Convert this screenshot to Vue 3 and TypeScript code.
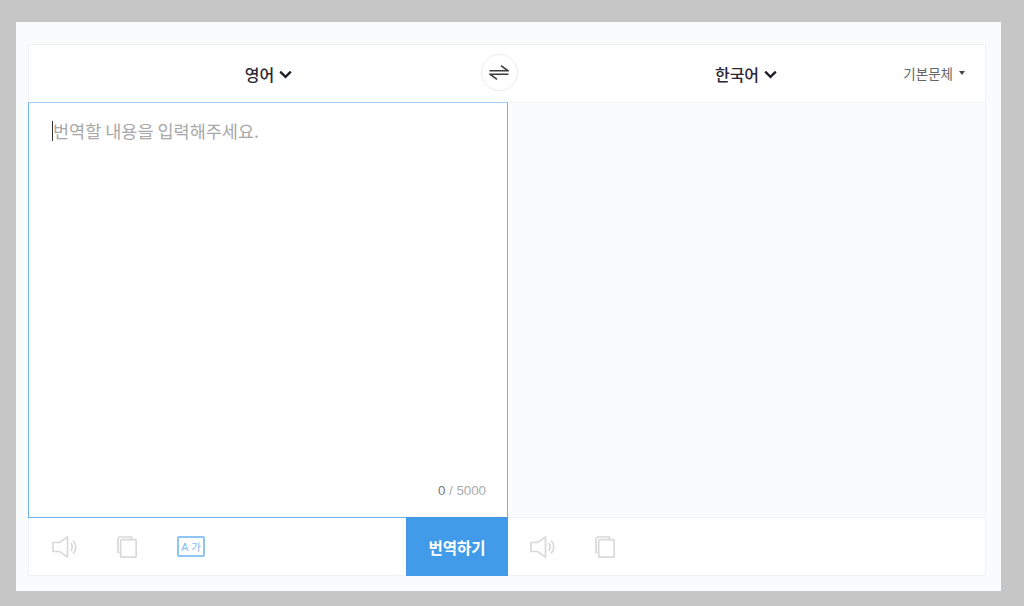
<script setup lang="ts">
const placeholder: string = '번역할 내용을 입력해주세요.'
</script>

<template>
  <div class="page">
    <div class="panel">
      <div class="card">
        <header class="head">
          <div class="lang-cell">
            <span class="lang">영어</span>
            <svg class="chev" width="13" height="9" viewBox="0 0 13 9"><path d="M1.2 1.6 6.5 6.9 11.8 1.6" fill="none" stroke="#1c1c24" stroke-width="2.2"/></svg>
          </div>
          <div class="lang-cell right">
            <span class="lang">한국어</span>
            <svg class="chev" width="13" height="9" viewBox="0 0 13 9"><path d="M1.2 1.6 6.5 6.9 11.8 1.6" fill="none" stroke="#1c1c24" stroke-width="2.2"/></svg>
            <div class="font-select">
              <span>기본문체</span>
              <i class="caret"></i>
            </div>
          </div>
          <button class="swap" type="button" aria-label="swap">
            <svg width="20" height="17" viewBox="0 0 20 17">
              <path d="M0.5 6.8H19L12 1.6" fill="none" stroke="#3c3c3c" stroke-width="1.5"/>
              <path d="M19.5 10.2H1L8 15.4" fill="none" stroke="#3c3c3c" stroke-width="1.5"/>
            </svg>
          </button>
        </header>
        <div class="body">
          <section class="input">
            <div class="placeholder"><i class="cursor"></i>{{ placeholder }}</div>
            <div class="count"><b>0</b> / 5000</div>
          </section>
          <section class="output"></section>
        </div>
        <footer class="foot">
          <div class="foot-left">
            <div class="tools">
              <svg class="speaker" width="26" height="22" viewBox="0 0 26 22" fill="none" stroke="#d9d9d9" stroke-width="1.7">
                <path d="M1 6.5H7.5L15.5 1V21L7.5 15.5H1Z"/>
                <path d="M18.5 7a5.5 5.5 0 0 1 0 8"/>
                <path d="M21 4.5a9 9 0 0 1 0 13"/>
              </svg>
              <svg class="copy" width="20" height="22" viewBox="0 0 20 22" fill="none" stroke="#d9d9d9" stroke-width="1.7">
                <path d="M2.6 16.5H1V2.5L2.5 1H14.5V3"/>
                <rect x="3.7" y="3.7" width="15.5" height="17.5" rx="1"/>
              </svg>
              <div class="ag">
                <span>A</span><span class="ga">가</span>
              </div>
            </div>
            <button class="translate" type="button">번역하기</button>
          </div>
          <div class="foot-right">
            <svg class="speaker" width="26" height="22" viewBox="0 0 26 22" fill="none" stroke="#d9d9d9" stroke-width="1.7">
              <path d="M1 6.5H7.5L15.5 1V21L7.5 15.5H1Z"/>
              <path d="M18.5 7a5.5 5.5 0 0 1 0 8"/>
              <path d="M21 4.5a9 9 0 0 1 0 13"/>
            </svg>
            <svg class="copy" width="20" height="22" viewBox="0 0 20 22" fill="none" stroke="#d9d9d9" stroke-width="1.7">
              <path d="M2.6 16.5H1V2.5L2.5 1H14.5V3"/>
              <rect x="3.7" y="3.7" width="15.5" height="17.5" rx="1"/>
            </svg>
          </div>
        </footer>
      </div>
    </div>
  </div>
</template>

<style>
html, body { margin: 0; background: #c6c6c6; }
</style>

<style scoped>
.page {
  width: 1024px;
  height: 606px;
  box-sizing: border-box;
  padding: 22px 23px 15px 16px;
  background: #c6c6c6;
  font-family: "Liberation Sans", "Noto Sans CJK KR", sans-serif;
}
.panel {
  height: 100%;
  box-sizing: border-box;
  padding: 22px 15px 15px 12px;
  background: #fafbfd;
}
.card {
  height: 100%;
  box-sizing: border-box;
  display: flex;
  flex-direction: column;
  border: 1px solid #eff1f6;
  background: #fff;
}
.head {
  position: relative;
  flex: 0 0 57px;
  display: flex;
}
.lang-cell {
  position: relative;
  width: 479px;
  display: flex;
  align-items: center;
  justify-content: center;
  gap: 5px;
  padding-top: 1px;
  box-sizing: border-box;
}
.lang-cell.right { width: 476px; }
.lang {
  font-size: 16px;
  font-weight: 500;
  color: #2b2632;
  font-family: "Noto Sans CJK KR", sans-serif;
}
.chev { margin-top: 1px; }
.font-select {
  position: absolute;
  right: 19px;
  top: 19px;
  display: flex;
  align-items: center;
  gap: 6px;
  font-size: 13.5px;
  line-height: 18px;
  color: #666;
  font-family: "Noto Sans CJK KR", sans-serif;
}
.caret {
  width: 0;
  height: 0;
  border-left: 3.5px solid transparent;
  border-right: 3.5px solid transparent;
  border-top: 4px solid #444;
}
.swap {
  position: absolute;
  left: 452px;
  top: 9px;
  width: 37px;
  height: 37px;
  box-sizing: border-box;
  padding: 0 2px 0 0;
  border: 1px solid #ececec;
  border-radius: 50%;
  background: #fff;
  display: flex;
  align-items: center;
  justify-content: center;
}
.body {
  flex: 1;
  display: flex;
  min-height: 0;
}
.input {
  width: 480px;
  margin-left: -1px;
  box-sizing: border-box;
  border: 1px solid #6cb2ee;
  border-top-color: #9fd0f7;
  background: #fff;
  display: flex;
  flex-direction: column;
  justify-content: space-between;
  padding: 16px 21px 17px 23px;
}
.placeholder {
  display: flex;
  align-items: center;
  font-size: 17.5px;
  line-height: 24px;
  color: #a8a8a8;
  font-family: "Noto Sans CJK KR", sans-serif;
}
.cursor {
  width: 1px;
  height: 20px;
  background: #333;
}
.count {
  text-align: right;
  font-size: 13.3px;
  line-height: 18px;
  color: #aaa;
}
.count b { font-weight: 400; color: #777; }
.output {
  flex: 1;
  background: #fafbfd;
  border-top: 1px solid #f4f5f8;
  border-bottom: 1px solid #f2f3f6;
}
.foot {
  flex: 0 0 57px;
  min-height: 0;
  height: 57px;
  display: flex;
}
.foot-left {
  width: 479px;
  height: 57px;
  display: flex;
  justify-content: space-between;
}
.tools {
  display: flex;
  align-items: center;
  gap: 39px;
  padding-left: 23px;
}
.ag {
  width: 28px;
  height: 21px;
  box-sizing: border-box;
  border: 2px solid #8fc5f4;
  border-radius: 2px;
  display: flex;
  align-items: center;
  justify-content: center;
  gap: 3px;
  margin-left: 1px;
  font-size: 10.5px;
  color: #7fbcf1;
}
.ga { font-family: "Noto Sans CJK KR", sans-serif; }
.translate {
  width: 102px;
  height: 59px;
  margin-top: -1px;
  border: 0;
  padding: 0;
  background: #429be8;
  color: #fff;
  font-size: 15.5px;
  font-weight: 700;
  font-family: "Noto Sans CJK KR", sans-serif;
}
.foot-right {
  display: flex;
  align-items: center;
  gap: 39px;
  padding-left: 22px;
}
</style>
